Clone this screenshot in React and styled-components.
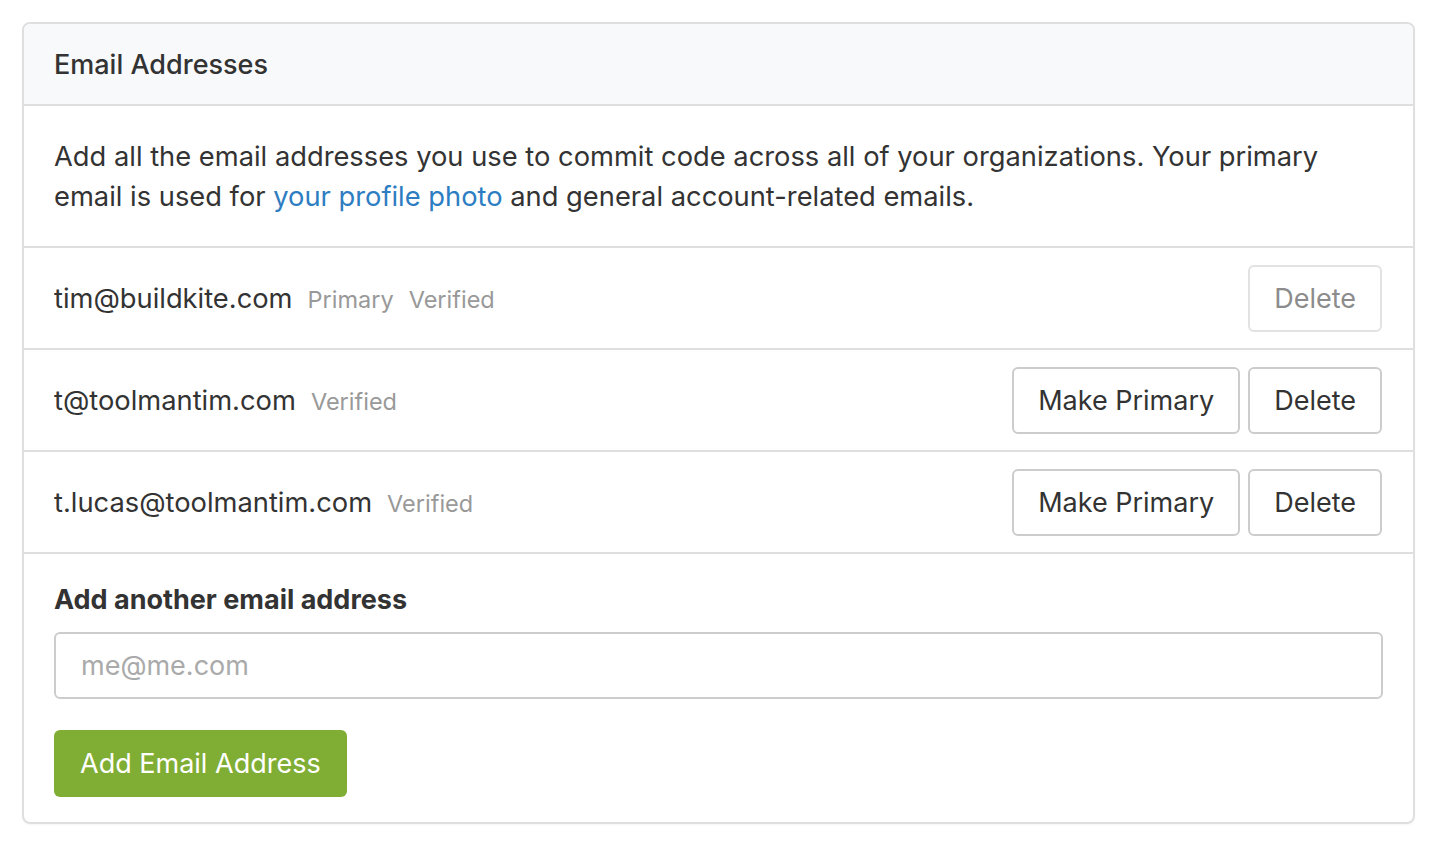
import React from 'react'
import styled, { createGlobalStyle } from 'styled-components'

const Global = createGlobalStyle`
    body {
        margin: 0;
        background: #fff;
        font-family: Inter, "Noto Sans", "Liberation Sans", sans-serif;
        color: #333;
    }
`

const Page = styled.div`
    padding: 22px 25px 28px 22px;
`

const Panel = styled.div`
    border: 2px solid #dfdfdf;
    border-radius: 8px;
    overflow: hidden;
    box-shadow: 0 1px 2px rgba(0, 0, 0, 0.04);
`

const Header = styled.div`
    background: #f8f9fa;
    height: 82px;
    box-sizing: border-box;
    padding: 0 30px;
    display: flex;
    align-items: center;
    font-size: 27px;
    font-weight: 500;
    color: #333;
    border-bottom: 2px solid #dfdfdf;
`

const Section = styled.div`
    padding: ${(p) => p.pad || '30px'};
    border-bottom: ${(p) => (p.last ? 'none' : '2px solid #dfdfdf')};
`

const Intro = styled.p`
    margin: 0;
    max-width: 1320px;
    font-size: 27.3px;
    line-height: 40px;
    color: #333;
`

const Link = styled.a`
    color: #2d7dc2;
    text-decoration: none;
`

const Row = styled.div`
    height: 102px;
    box-sizing: border-box;
    padding: 0 31px 0 30px;
    display: flex;
    align-items: center;
    justify-content: space-between;
    border-bottom: 2px solid #dfdfdf;
`

const Address = styled.div`
    display: flex;
    align-items: baseline;
    gap: 15px;
`

const Email = styled.span`
    font-size: 27.3px;
    color: #333;
`

const Tag = styled.span`
    font-size: 23.5px;
    color: #999;
`

const Actions = styled.div`
    display: flex;
    gap: 8px;
`

const Button = styled.button`
    font-family: inherit;
    font-size: 27px;
    height: 67px;
    padding: 0 24px;
    background: #fff;
    border: 2px solid ${(p) => (p.disabled ? '#e2e2e2' : '#cccccc')};
    color: ${(p) => (p.disabled ? '#8c8c8c' : '#333')};
    border-radius: 6px;
    cursor: pointer;
`

const Label = styled.div`
    font-size: 27px;
    font-weight: 700;
    color: #333;
    margin-bottom: 12px;
    line-height: 40px;
`

const Input = styled.input`
    display: block;
    width: 100%;
    box-sizing: border-box;
    height: 67px;
    border: 2px solid #cccccc;
    border-radius: 6px;
    padding: 0 25px;
    font-family: inherit;
    font-size: 27px;
    color: #333;
    outline: none;

    &::placeholder {
        color: #aaaaaa;
    }
`

const Submit = styled.button`
    margin-top: 31px;
    font-family: inherit;
    font-size: 27px;
    height: 67px;
    padding: 0 26px;
    border: none;
    border-radius: 6px;
    background: #80ae34;
    color: #fff;
    cursor: pointer;
`

const emails = [
    { address: 'tim@buildkite.com', tags: ['Primary', 'Verified'], primary: true },
    { address: 't@toolmantim.com', tags: ['Verified'] },
    { address: 't.lucas@toolmantim.com', tags: ['Verified'] },
]

const App = () => {
    return (
        <Page>
            <Global />
            <Panel>
                <Header>Email Addresses</Header>
                <Section pad="31px 30px 29px">
                    <Intro>
                        Add all the email addresses you use to commit code across all of your organizations. Your primary
                        email is used for <Link href="#">your profile photo</Link> and general account-related emails.
                    </Intro>
                </Section>
                {emails.map((e) => (
                    <Row key={e.address}>
                        <Address>
                            <Email>{e.address}</Email>
                            {e.tags.map((t) => (
                                <Tag key={t}>{t}</Tag>
                            ))}
                        </Address>
                        <Actions>
                            {!e.primary && <Button>Make Primary</Button>}
                            <Button disabled={e.primary}>Delete</Button>
                        </Actions>
                    </Row>
                ))}
                <Section pad="26px 30px 25px" last>
                    <Label>Add another email address</Label>
                    <Input placeholder="me@me.com" />
                    <Submit>Add Email Address</Submit>
                </Section>
            </Panel>
        </Page>
    )
}

export default App
